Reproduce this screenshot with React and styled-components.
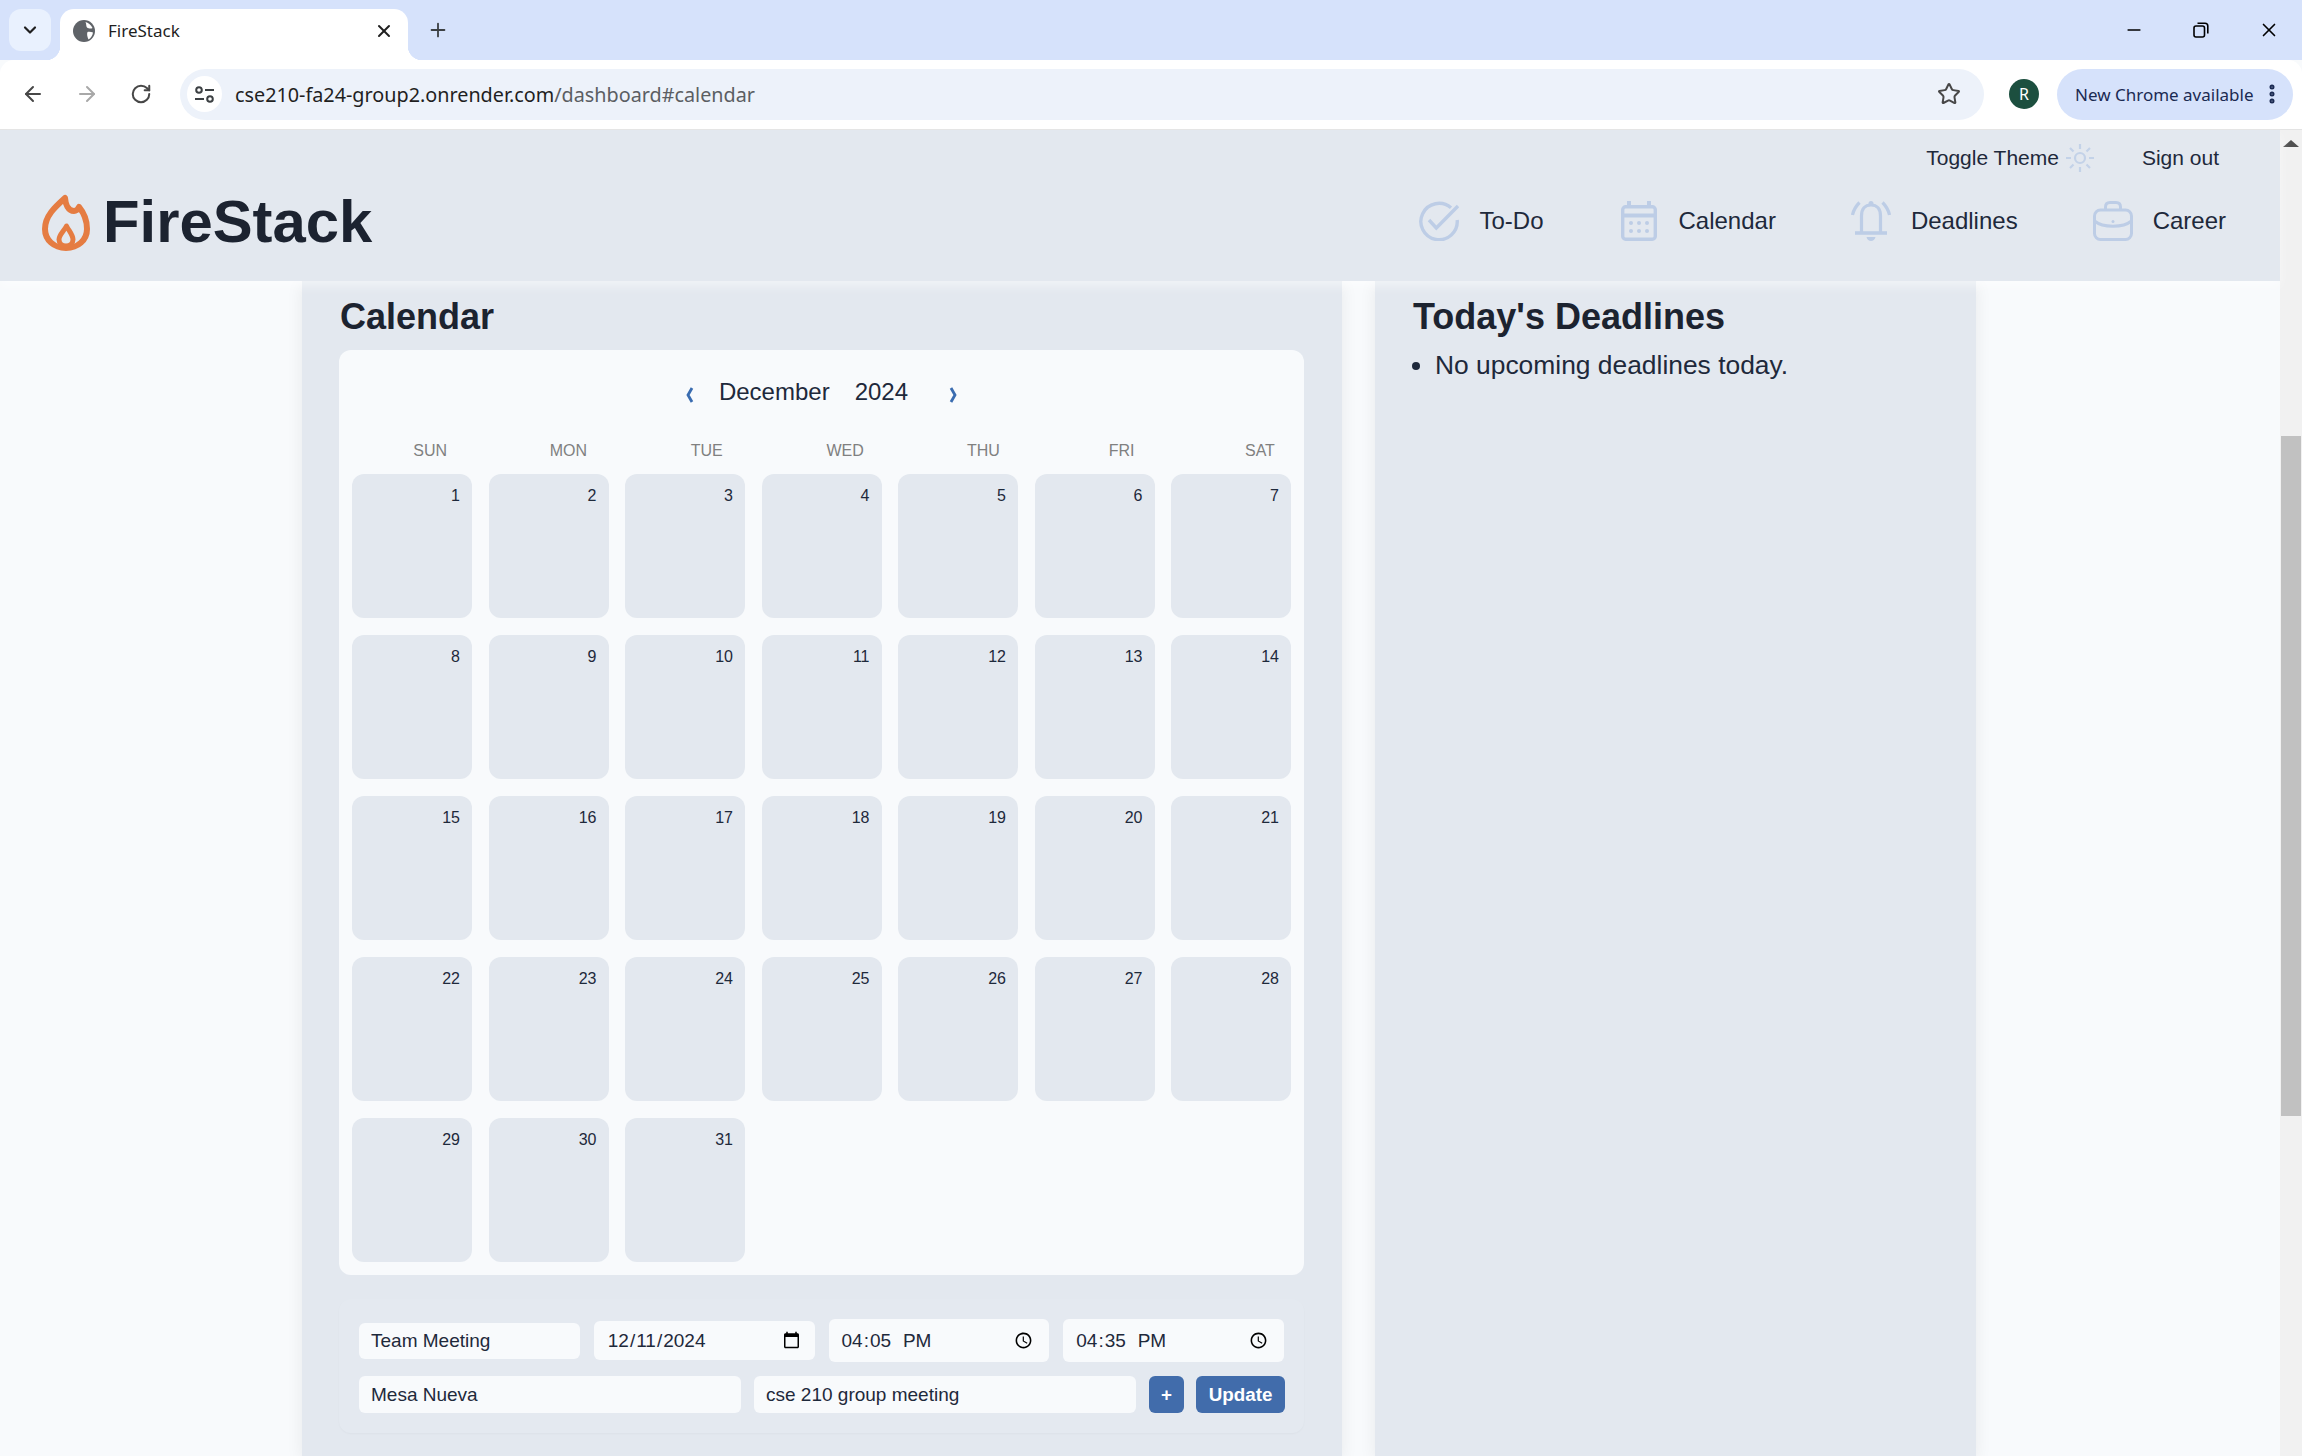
import React from "react"
import styled, { createGlobalStyle } from 'styled-components'
import { ChevronDown, X, Plus, ArrowLeft, ArrowRight, RotateCw, Star, EllipsisVertical, Minus } from 'lucide-react'

const GlobalStyle = createGlobalStyle`
  html, body{
    margin:0;
    padding:0;
    height:100%;
    overflow:hidden;
    background:#f8fafc;
    font-family:"Liberation Sans", Arial, sans-serif;
    color:#1e293b;
  }
  *{ box-sizing:border-box; }
`

const days = Array.from({ length: 31 }, (_, i) => i + 1)
const weekdays = ['SUN', 'MON', 'TUE', 'WED', 'THU', 'FRI', 'SAT']

function Flame(){
  return(
    <svg width="48" height="57" viewBox="0 0 48 57" fill="none" stroke="#e57c42">
      <path strokeWidth="6" strokeLinejoin="round" d="M23 4C23.500 10 26 17 32 17C35 17 36 15 37 13C42 19 45 27 45 35C45 46 36 54 24 54C12 54 3 46 3 35C3 22 13 13 23 4Z"/>
      <path strokeWidth="5" strokeLinejoin="round" d="M24.500 32C22 37 17 41 17 45.500C17 49.500 20 52 24 52C28 52 31 49.500 31 45.500C31 41 27 37 24.500 32Z"/>
    </svg>
  )
}

function CheckIcon(){
  return(
    <svg width="40" height="40" viewBox="0 0 40 40" fill="none" stroke="#bdcde6" strokeWidth="3.400">
      <path d="M32 6.800A18.200 18.200 0 1 0 38.200 19"/>
      <path d="M10 19L17.300 27L39 5"/>
    </svg>
  )
}

function CalendarIcon(){
  return(
    <svg width="40" height="40" viewBox="-2 0 40 40" fill="none" stroke="#bdcde6" strokeWidth="3.400">
      <rect x="1.700" y="5.700" width="32.600" height="32.600" rx="3"/>
      <path d="M1 14.500H35" strokeWidth="4"/>
      <path d="M8 0V5M28 0V5" strokeWidth="4"/>
      <g fill="#bdcde6" stroke="none">
        <circle cx="10" cy="22" r="2"/><circle cx="18" cy="22" r="2"/><circle cx="26" cy="22" r="2"/>
        <circle cx="10" cy="30" r="2"/><circle cx="18" cy="30" r="2"/><circle cx="26" cy="30" r="2"/>
      </g>
    </svg>
  )
}

function BellIcon(){
  return(
    <svg width="40" height="40" viewBox="0 0 40 40" fill="none" stroke="#bdcde6" strokeWidth="3.200">
      <path d="M10.500 31V15C10.500 8 14 4 20 4C26 4 29.500 8 29.500 15V31"/>
      <path d="M4 32H36" strokeWidth="3.600"/>
      <path d="M1.500 14C2.500 9 5 5 8.500 1.500M38.500 14C37.500 9 35 5 31.500 1.500"/>
      <circle cx="20" cy="2.500" r="2.500" fill="#bdcde6" stroke="none"/>
      <path d="M15.500 36H24.500C24 38.500 22 40 20 40C18 40 16 38.500 15.500 36Z" fill="#bdcde6" stroke="none"/>
    </svg>
  )
}

function CaseIcon(){
  return(
    <svg width="40" height="40" viewBox="0 0 40 40" fill="none" stroke="#bdcde6" strokeWidth="3">
      <rect x="1.500" y="9" width="37" height="29.500" rx="6"/>
      <path d="M12.500 9V6C12.500 3 14 1.500 17 1.500H23C26 1.500 27.500 3 27.500 6V9"/>
      <path d="M1.500 20C10 27 30 27 38.500 20"/>
      <circle cx="20" cy="20.500" r="1.500" fill="#bdcde6" stroke="none"/>
    </svg>
  )
}

function SunIcon(){
  return(
    <svg width="28" height="28" viewBox="0 0 28 28" fill="none" stroke="#c3d2e8" strokeWidth="2.200">
      <circle cx="14" cy="14" r="5"/>
      <path d="M14 0V5M14 23V28M0 14H5M23 14H28M4 4L7.500 7.500M20.500 20.500L24 24M4 24L7.500 20.500M20.500 7.500L24 4"/>
    </svg>
  )
}

function GlobeIcon(){
  return(
    <svg width="22" height="22" viewBox="0 0 22 22">
      <circle cx="11" cy="11" r="11" fill="#5f6368"/>
      <path fill="#fff" d="M12.500 2C15 2.500 18 4.500 19.500 8C18 9 15.500 8.500 14 7.500C13 6.500 13.500 4 12.500 2ZM14.500 12C16.500 11.500 18.500 12 20 12.500C19.500 15.500 18 18 15.500 19.500C14.500 17.500 13.500 14 14.500 12Z"/>
    </svg>
  )
}

function SiteIcon(){
  return(
    <svg width="19" height="17" viewBox="0 0 19 17" fill="none" stroke="#3c4043" strokeWidth="2">
      <circle cx="4" cy="4" r="2.800"/>
      <path d="M10 4H19M0 13H9"/>
      <circle cx="15" cy="13" r="2.800"/>
    </svg>
  )
}

function RestoreIcon(){
  return(
    <svg width="16" height="16" viewBox="0 0 16 16" fill="none" stroke="#000" strokeWidth="1.600">
      <rect x="1" y="4" width="10.500" height="11" rx="2"/>
      <path d="M4.500 1.200H12C13.800 1.200 14.800 2.200 14.800 4V11.500"/>
    </svg>
  )
}

function PagerArrow({ flip }){
  return(
    <Pager flip={flip} viewBox="0 0 10 16" fill="none" stroke="#3a6cb0" strokeWidth="2.800">
      <path d="M7 1L3 8L7 15"/>
    </Pager>
  )
}

function App(){
  return(
    <Screen>
      <GlobalStyle/>
      <TabStrip>
        <TabSearch><ChevronDown size={20} strokeWidth={2.6} color="#1f1f1f"/></TabSearch>
        <Tab>
          <GlobeIcon/>
          <TabTitle>FireStack</TabTitle>
          <X size={20} strokeWidth={2.4} color="#1f1f1f"/>
        </Tab>
        <NewTab><Plus size={22} strokeWidth={2} color="#3c4043"/></NewTab>
        <WindowControls>
          <Minus size={20} strokeWidth={2} color="#000"/>
          <RestoreIcon/>
          <X size={22} strokeWidth={1.800} color="#000"/>
        </WindowControls>
      </TabStrip>
      <Toolbar>
        <NavButton><ArrowLeft size={24} strokeWidth={2} color="#474747"/></NavButton>
        <NavButton><ArrowRight size={24} strokeWidth={2} color="#a8a8a8"/></NavButton>
        <NavButton><RotateCw size={22} strokeWidth={2.200} color="#474747"/></NavButton>
        <Omnibox>
          <SiteBadge><SiteIcon/></SiteBadge>
          <Url>cse210-fa24-group2.onrender.com<UrlPath>/dashboard#calendar</UrlPath></Url>
          <Star size={24} strokeWidth={2} color="#474747"/>
        </Omnibox>
        <Avatar>R</Avatar>
        <UpdatePill>
          New Chrome available
          <EllipsisVertical size={24} strokeWidth={3} color="#1b2a52"/>
        </UpdatePill>
      </Toolbar>
      <Viewport>
        <Page>
          <Header>
            <Logo>
              <Flame/>
              <Brand>FireStack</Brand>
            </Logo>
            <HeaderRight>
              <TopLinks>
                <ThemeToggle>Toggle Theme<SunIcon/></ThemeToggle>
                <span>Sign out</span>
              </TopLinks>
              <Nav>
                <NavItem><CheckIcon/>To-Do</NavItem>
                <NavItem><CalendarIcon/>Calendar</NavItem>
                <NavItem><BellIcon/>Deadlines</NavItem>
                <NavItem><CaseIcon/>Career</NavItem>
              </Nav>
            </HeaderRight>
          </Header>
          <Content>
            <MainPanel>
              <Title>Calendar</Title>
              <CalendarCard>
                <MonthBar>
                  <PagerArrow/>
                  <MonthName>December</MonthName>
                  <YearName>2024</YearName>
                  <PagerArrow flip/>
                </MonthBar>
                <WeekRow>
                  {weekdays.map(d => <span key={d}>{d}</span>)}
                </WeekRow>
                <DayGrid>
                  {days.map(d => <DayCell key={d}>{d}</DayCell>)}
                </DayGrid>
              </CalendarCard>
              <EventForm>
                <FormRowTop>
                  <TextField defaultValue="Team Meeting"/>
                  <DateField type="date" defaultValue="2024-12-11"/>
                  <TimeField type="time" defaultValue="16:05"/>
                  <TimeField type="time" defaultValue="16:35"/>
                </FormRowTop>
                <FormRowBottom>
                  <WideField defaultValue="Mesa Nueva"/>
                  <WideField defaultValue="cse 210 group meeting"/>
                  <AddButton>+</AddButton>
                  <UpdateButton>Update</UpdateButton>
                </FormRowBottom>
              </EventForm>
            </MainPanel>
            <SidePanel>
              <Title>Today's Deadlines</Title>
              <DeadlineList>
                <li>No upcoming deadlines today.</li>
              </DeadlineList>
            </SidePanel>
          </Content>
        </Page>
        <Scrollbar>
          <ScrollUp/>
          <ScrollThumb/>
        </Scrollbar>
      </Viewport>
    </Screen>
  )
}

const Screen = styled.div`
  display:flex;
  flex-direction:column;
  width:2302px;
  height:1456px;
  overflow:hidden;
`
const TabStrip = styled.div`
  display:flex;
  align-items:flex-end;
  height:60px;
  padding-left:9px;
  background:#d6e2fb;
  flex:none;
`
const TabSearch = styled.div`
  display:flex;
  align-items:center;
  justify-content:center;
  align-self:flex-start;
  margin-top:9px;
  width:42px;
  height:42px;
  border-radius:12px;
  background:#e9f1fe;
`
const Tab = styled.div`
  position:relative;
  display:flex;
  align-items:center;
  margin-left:9px;
  width:348px;
  height:51px;
  padding:0 14px 8px 13px;
  background:#fff;
  border-radius:14px 14px 0 0;
  :before, :after{
    position:absolute;
    content:'';
    bottom:0;
    width:14px;
    height:14px;
  }
  :before{
    left:-14px;
    background:radial-gradient(circle at 0 0, transparent 14px, #fff 14.500px);
  }
  :after{
    right:-14px;
    background:radial-gradient(circle at 100% 0, transparent 14px, #fff 14.500px);
  }
`
const TabTitle = styled.span`
  flex:1;
  margin-left:13px;
  font:17px "Noto Sans", sans-serif;
  color:#1f1f1f;
`
const NewTab = styled.div`
  display:flex;
  align-self:center;
  margin-left:19px;
`
const WindowControls = styled.div`
  display:flex;
  align-items:center;
  align-self:flex-start;
  gap:49px;
  height:60px;
  margin-left:auto;
  padding-right:22px;
`
const Toolbar = styled.div`
  display:flex;
  align-items:center;
  height:70px;
  padding:0 9px 1px 21px;
  background:#fff;
  border-radius:14px 14px 0 0;
  border-bottom:1px solid #e3e3e3;
  flex:none;
  margin-top:0;
`
const NavButton = styled.div`
  display:flex;
  justify-content:center;
  width:24px;
  margin-right:30px;
`
const Omnibox = styled.div`
  display:flex;
  align-items:center;
  width:1804px;
  height:51px;
  margin-left:-3px;
  padding:0 23px 0 7px;
  background:#edf2fa;
  border-radius:26px;
`
const SiteBadge = styled.div`
  display:flex;
  align-items:center;
  justify-content:center;
  width:35px;
  height:36px;
  border-radius:50%;
  background:#fff;
`
const Url = styled.div`
  flex:1;
  margin-left:13px;
  font:19.800px "Noto Sans", sans-serif;
  color:#1f1f1f;
`
const UrlPath = styled.span`
  color:#5b5e63;
`
const Avatar = styled.div`
  display:flex;
  align-items:center;
  justify-content:center;
  width:30px;
  height:30px;
  margin-left:25px;
  border-radius:50%;
  background:#1c4f3f;
  color:#fff;
  font:16px "Noto Sans", sans-serif;
`
const UpdatePill = styled.div`
  display:flex;
  align-items:center;
  justify-content:space-between;
  width:236px;
  height:51px;
  margin-left:18px;
  padding:0 9px 0 18px;
  border-radius:26px;
  background:#d6e2fb;
  color:#1b2a52;
  font:17px "Noto Sans", sans-serif;
`
const Viewport = styled.div`
  display:flex;
  flex:1;
  min-height:0;
`
const Page = styled.div`
  display:flex;
  flex-direction:column;
  flex:1;
  min-width:0;
`
const Header = styled.header`
  position:relative;
  z-index:10;
  display:flex;
  justify-content:space-between;
  height:151px;
  flex:none;
  padding:0 54px 0 42px;
  background:#e3e8ef;
  box-shadow:0 5px 10px rgba(255,255,255,.5);
`
const Logo = styled.div`
  display:flex;
  align-items:center;
  align-self:flex-end;
  gap:13px;
  padding-bottom:30px;
`
const Brand = styled.div`
  margin-top:-2px;
  font-size:59.800px;
  font-weight:bold;
  line-height:57px;
  color:#1c2330;
`
const HeaderRight = styled.div`
  display:flex;
  flex-direction:column;
  align-items:flex-end;
`
const TopLinks = styled.div`
  display:flex;
  align-items:center;
  gap:48px;
  height:28px;
  margin:14px 7px 29px 0;
  font-size:21px;
`
const ThemeToggle = styled.div`
  display:flex;
  align-items:center;
  gap:7px;
`
const Nav = styled.nav`
  display:flex;
  gap:75px;
`
const NavItem = styled.div`
  display:flex;
  align-items:center;
  gap:20px;
  font-size:24px;
`
const Content = styled.main`
  display:grid;
  grid-template-columns:1040px 601px;
  justify-content:center;
  gap:33px;
  flex:1;
  min-height:0;
  padding-right:2px;
  overflow:hidden;
`
const Panel = styled.section`
  background:#e3e8ef;
  box-shadow:0 4px 16px rgba(0,0,0,.07);
  overflow:hidden;
`
const MainPanel = styled(Panel)`
  padding:14px 38px 0 37px;
`
const SidePanel = styled(Panel)`
  padding:14px 37px 0 37px;
`
const Title = styled.h2`
  margin:0 0 11px;
  padding-left:1px;
  font-size:36px;
  line-height:44px;
  font-weight:bold;
  color:#1c2330;
`
const CalendarCard = styled.div`
  height:925px;
  padding:18px 13px 13px;
  background:#f8fafc;
  border-radius:12px;
`
const MonthBar = styled.div`
  display:flex;
  align-items:center;
  justify-content:center;
  height:48px;
  font-size:24px;
  color:#1e293b;
`
const Pager = styled.svg`
  width:10px;
  height:16px;
  margin-top:6px;
  transform:${props => props.flip ? 'scaleX(-1)' : 'none'};
`
const MonthName = styled.span`
  margin:0 25px 0 24px;
`
const YearName = styled.span`
  margin-right:40px;
`
const WeekRow = styled.div`
  display:grid;
  grid-template-columns:repeat(7, 138.300px);
  width:968px;
  height:24px;
  margin:23px 0 11px 9px;
  font-size:16px;
  line-height:24px;
  text-align:center;
  color:#808080;
`
const DayGrid = styled.div`
  display:grid;
  grid-template-columns:repeat(7, 120px);
  grid-auto-rows:144px;
  justify-content:space-between;
  row-gap:17px;
`
const DayCell = styled.div`
  padding:10px 12px;
  background:#e3e8ef;
  border-radius:12px;
  font-size:16px;
  line-height:24px;
  text-align:right;
  color:#1e293b;
`
const EventForm = styled.form`
  display:flex;
  flex-direction:column;
  gap:14px;
  margin-top:24px;
  padding:20px;
  border-radius:12px;
  background:#e4e9f0;
  box-shadow:0 1px 2px rgba(0,0,0,.03);
`
const FormRowTop = styled.div`
  display:grid;
  grid-template-columns:repeat(4, 1fr);
  align-items:center;
  gap:14px;
  height:43px;
`
const FormRowBottom = styled.div`
  display:flex;
  gap:13px;
  height:37px;
  margin-right:-1px;
`
const TextField = styled.input`
  width:100%;
  height:36px;
  padding:0 12px;
  border:none;
  border-radius:6px;
  outline:none;
  background:#f8fafc;
  color:#1e293b;
  font:19px "Liberation Sans", Arial, sans-serif;
`
const DateField = styled(TextField)`
  height:39px;
  padding-left:13px;
`
const TimeField = styled(TextField)`
  height:43px;
  padding-left:12px;
  &::-webkit-datetime-edit-ampm-field{
    margin-left:6px;
  }
`
const WideField = styled(TextField)`
  flex:1;
  min-width:0;
  width:auto;
  height:37px;
`
const ActionButton = styled.button`
  height:37px;
  padding:0;
  border:none;
  border-radius:6px;
  background:#416cab;
  color:#fff;
  font:bold 18.800px "Liberation Sans", Arial, sans-serif;
`
const AddButton = styled(ActionButton)`
  width:35px;
`
const UpdateButton = styled(ActionButton)`
  width:89px;
  margin-left:-1px;
`
const DeadlineList = styled.ul`
  margin:-4px 0 0;
  padding-left:23px;
  font-size:26.400px;
  line-height:38px;
  color:#1e293b;
`
const Scrollbar = styled.aside`
  display:flex;
  flex-direction:column;
  align-items:center;
  width:22px;
  flex:none;
  background:#f1f1f1;
`
const ScrollUp = styled.div`
  margin-top:10px;
  border-left:8px solid transparent;
  border-right:8px solid transparent;
  border-bottom:7px solid #505050;
`
const ScrollThumb = styled.div`
  width:20px;
  height:680px;
  margin-top:289px;
  background:#c1c1c1;
`

export default App
